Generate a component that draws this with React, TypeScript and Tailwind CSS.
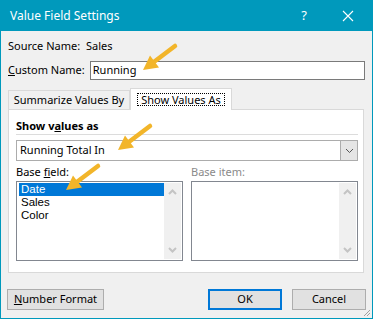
import React from "react";

const font = "font-['Noto_Sans',sans-serif]";

function Arrow({ left, top }: { left: number; top: number }) {
  // golden callout arrow, tip at bottom-left of the 40x32 box
  return (
    <svg
      width="40"
      height="32"
      viewBox="0 0 40 32"
      className="absolute pointer-events-none"
      style={{ left, top }}
    >
      <line x1="36" y1="4" x2="15.5" y2="19.5" stroke="#f2b52a" strokeWidth="4.5" strokeLinecap="round" />
      <polygon points="4,28 20,25.5 11,13.5" fill="#f2b52a" />
    </svg>
  );
}

function Chevron({ up, color = "#c4c4c4", w = 2 }: { up?: boolean; color?: string; w?: number }) {
  return (
    <svg width="9" height="6" viewBox="0 0 9 6">
      <polyline
        points={up ? "1,5 4.5,1.5 8,5" : "1,1 4.5,4.5 8,1"}
        fill="none"
        stroke={color}
        strokeWidth={w}
      />
    </svg>
  );
}

function ListBox({ items, selected }: { items: string[]; selected?: number }) {
  return (
    <div className="flex h-[80px] w-[167px] border border-[#828790] bg-white p-px">
      <div className="flex-1 pl-px">
        {items.map((it, i) => (
          <div
            key={it}
            className={`h-[13px] overflow-hidden pl-[2px] font-['Liberation_Sans',sans-serif] text-[11.5px] leading-[13px] ${
              i === selected ? "bg-[#0078d7] text-white" : "text-black"
            }`}
          >
            {it}
          </div>
        ))}
      </div>
      <div className="flex w-[17px] flex-col items-center justify-between bg-[#f0f0f0] py-[6px]">
        <Chevron up />
        <Chevron />
      </div>
    </div>
  );
}

export default function App() {
  return (
    <div
      className={`${font} relative flex h-[319px] w-[373px] flex-col border-x border-b border-[#0099bc] bg-[#f0f0f0] text-[11px] text-black`}
    >
      {/* title bar */}
      <div className="-mx-px flex h-[31px] items-center bg-[#0099bc] pl-[10px] text-white">
        <span className="flex-1 text-[12px]">Value Field Settings</span>
        <span className="w-[14px] text-center text-[13px]">?</span>
        <svg width="12" height="12" viewBox="0 0 12 12" className="ml-[31px] mr-[19px]">
          <path d="M1 1L11 11M11 1L1 11" stroke="white" strokeWidth="1.1" />
        </svg>
      </div>

      <div className="px-[7px]">
        <div className="mt-[7px] flex h-[15px] items-center leading-[15px]">
          <span className="w-[78px]">Source Name:</span>
          <span>Sales</span>
        </div>

        <div className="mt-[8px] flex h-[19px] items-center">
          <span className="w-[82px]">
            <u>C</u>ustom Name:
          </span>
          <div className="flex h-[19px] w-[276px] items-center border border-[#7a7a7a] bg-white pl-[2px]">
            Running
          </div>
        </div>

        {/* tabs */}
        <div className="mt-[8px] flex h-[21px] items-end">
          <div className="flex h-[19px] w-[122px] items-center justify-center border-x border-t border-[#d9d9d9] bg-[#f0f0f0]">
            Summarize Values By
          </div>
          <div className="relative z-10 -mb-px flex h-[22px] w-[102px] items-center justify-center border-x border-t border-[#d9d9d9] bg-white">
            <span className="border border-dotted border-black px-[3px] leading-[11px]">Show Values As</span>
          </div>
        </div>

        <div className="flex h-[164px] w-[356px] flex-col border border-[#d9d9d9] bg-white pl-[7px] pr-[5px]">
          <div className="mt-[8px] h-[15px] font-bold leading-[15px]">
            Show v<u>a</u>lues as
          </div>
          <div className="mt-px h-px bg-[#dcdcdc]" />
          <div className="mt-[5px] flex h-[21px] items-stretch border border-[#acacac] bg-white">
            <div className="flex flex-1 items-center pl-[3px]">Running Total In</div>
            <div className="flex w-[17px] items-center justify-center border-l border-[#acacac] bg-[#e5e5e5]">
              <Chevron color="#555" w={1} />
            </div>
          </div>

          <div className="mt-[3px] flex h-[15px] gap-[8px] leading-[15px]">
            <span className="w-[167px]">
              Base <u>f</u>ield:
            </span>
            <span className="text-[#8a8a8a]">Base item:</span>
          </div>
          <div className="mt-[2px] flex gap-[8px]">
            <ListBox items={["Date", "Sales", "Color"]} selected={0} />
            <ListBox items={[]} />
          </div>
        </div>

        {/* buttons */}
        <div className="mt-[16px] flex h-[21px] items-stretch">
          <button className="-ml-px flex w-[97px] items-center justify-center border border-[#adadad] bg-[#e1e1e1]">
            <span>
              <u>N</u>umber Format
            </span>
          </button>
          <div className="flex-1" />
          <button className="flex w-[74px] items-center justify-center border-2 border-[#0078d7] bg-[#e1e1e1]">
            OK
          </button>
          <button className="ml-[10px] mr-[-1px] flex w-[74px] items-center justify-center border border-[#adadad] bg-[#e1e1e1]">
            Cancel
          </button>
        </div>
      </div>

      {/* resize grip */}
      <svg width="8" height="8" viewBox="0 0 8 8" className="absolute bottom-px right-px">
        <path d="M7 1L1 7M7 4L4 7" stroke="#a0a0a0" strokeWidth="1" />
      </svg>

      <Arrow left={138} top={42} />
      <Arrow left={113} top={122} />
      <Arrow left={61} top={162} />
    </div>
  );
}
